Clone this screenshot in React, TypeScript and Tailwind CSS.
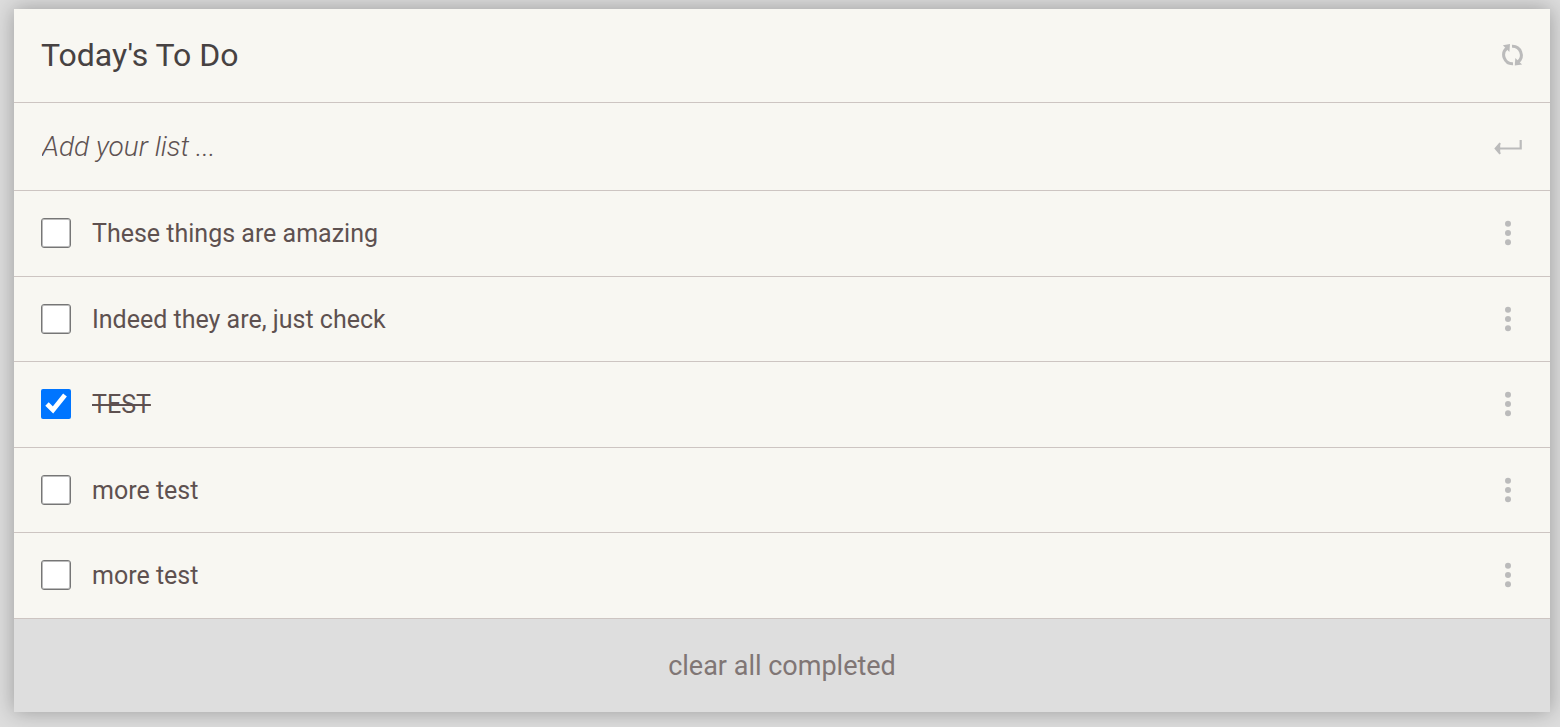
import { useState } from "react";
import type { FormEvent } from "react";

type Task = { id: number; text: string; done: boolean };

const initialTasks: Task[] = [
  { id: 1, text: "These things are amazing", done: false },
  { id: 2, text: "Indeed they are, just check", done: false },
  { id: 3, text: "TEST", done: true },
  { id: 4, text: "more test", done: false },
  { id: 5, text: "more test", done: false },
];

function RefreshIcon() {
  return (
    <svg viewBox="0 0 24 24" className="size-6" fill="none" aria-hidden="true">
      <path d="M11 3.2A8.9 8.9 0 0 1 17 19" stroke="currentColor" strokeWidth="3" />
      <path d="M12 20.8A8.9 8.9 0 0 1 6 5" stroke="currentColor" strokeWidth="3" />
      <path d="M1.9 2.2 9 1 8.4 9Z" fill="currentColor" />
      <path d="M21.1 21.6 13.8 22.6 14.3 15Z" fill="currentColor" />
    </svg>
  );
}

function EnterIcon() {
  return (
    <svg viewBox="0 0 28 16" className="h-4 w-7" fill="none" aria-hidden="true">
      <path d="M26.7 1V9.5H2" stroke="currentColor" strokeWidth="2.2" />
      <path d="M6.2 4.2 1.6 9.5 6.2 14.8" stroke="currentColor" strokeWidth="2" />
      <path d="M1.6 9.5 6.2 5V14Z" fill="currentColor" />
    </svg>
  );
}

function DotsIcon() {
  return (
    <svg viewBox="0 0 8 26" className="h-[26px] w-2" fill="currentColor" aria-hidden="true">
      <circle cx="4" cy="3.7" r="3" />
      <circle cx="4" cy="13" r="3" />
      <circle cx="4" cy="22.3" r="3" />
    </svg>
  );
}

export default function App() {
  const [tasks, setTasks] = useState(initialTasks);
  const [draft, setDraft] = useState("");

  const toggle = (id: number) =>
    setTasks(tasks.map((t) => (t.id === id ? { ...t, done: !t.done } : t)));

  const add = (event: FormEvent) => {
    event.preventDefault();
    if (!draft.trim()) return;
    setTasks([...tasks, { id: Date.now(), text: draft.trim(), done: false }]);
    setDraft("");
  };

  return (
    <div className="min-h-screen bg-[#dddddd] pt-[9px] pr-[10px] pb-[15px] pl-[14px] font-['Roboto',sans-serif]">
      <main className="bg-[#f8f7f2] shadow-[0_0_20px_rgba(0,0,0,0.3)]">
        <header className="flex h-[94px] items-center justify-between border-b border-[#cdc5c2] pr-[25px] pb-0.5 pl-[27px]">
          <h1 className="text-[32px] leading-10 text-[#474242]">Today's To Do</h1>
          <button type="button" aria-label="Refresh" className="text-[#bbbbbb]">
            <RefreshIcon />
          </button>
        </header>
        <form onSubmit={add} className="flex h-[88px] items-center border-b border-[#cdc5c2] px-7">
          <input
            type="text"
            aria-label="Add your list"
            placeholder="Add your list ..."
            value={draft}
            onChange={(event) => setDraft(event.target.value)}
            className="min-w-0 flex-1 bg-transparent text-[28px] leading-9 font-light text-[#544949] italic outline-none placeholder:text-[#5e5252]"
          />
          <button type="submit" aria-label="Add" className="text-[#bbbbbb]">
            <EnterIcon />
          </button>
        </form>
        <ul>
          {tasks.map((task) => (
            <li
              key={task.id}
              className="flex items-center justify-between border-b border-[#cdc5c2] pr-[38px] pl-[27px] odd:h-[86px] odd:pb-px even:h-[85px]"
            >
              <label className="flex items-center gap-[21px]">
                <input
                  type="checkbox"
                  checked={task.done}
                  onChange={() => toggle(task.id)}
                  className="size-[30px] appearance-none rounded-[3px] border border-[#767676] bg-white shadow-[inset_0_0_0_1px_#bbbbbb] checked:appearance-auto checked:shadow-none"
                />
                <span
                  className={
                    task.done
                      ? "pt-0.5 text-[25px] leading-7 text-[#5e5150] line-through"
                      : "pt-0.5 text-[25px] leading-7 text-[#5e5150]"
                  }
                >
                  {task.text}
                </span>
              </label>
              <button type="button" aria-label={`Options for ${task.text}`} className="text-[#bbbbbb]">
                <DotsIcon />
              </button>
            </li>
          ))}
        </ul>
        <button
          type="button"
          onClick={() => setTasks(tasks.filter((t) => !t.done))}
          className="block h-[93px] w-full bg-[#dedede] text-[27px] leading-9 text-[#807675]"
        >
          clear all completed
        </button>
      </main>
    </div>
  );
}
